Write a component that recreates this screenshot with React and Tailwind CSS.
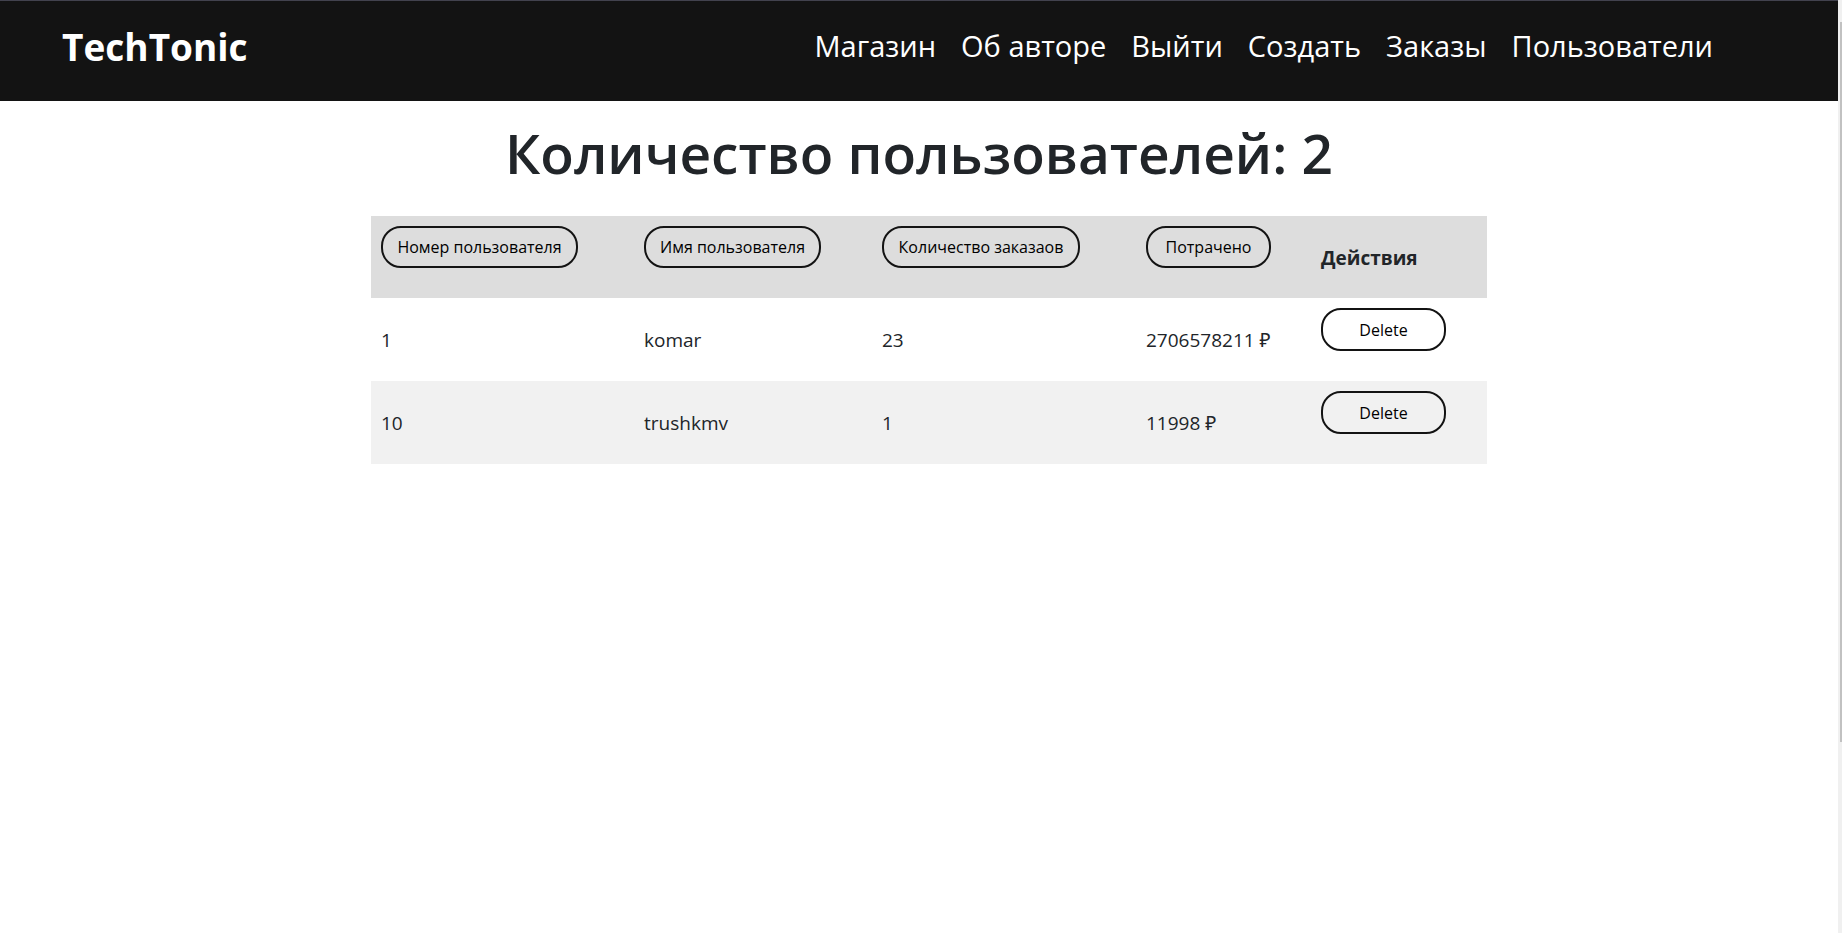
const links = ["Магазин", "Об авторе", "Выйти", "Создать", "Заказы", "Пользователи"];

const columns = [
  { title: "Номер пользователя", width: "w-[263px]", button: "w-[197px]" },
  { title: "Имя пользователя", width: "w-[238px]", button: "w-[177px]" },
  { title: "Количество заказаов", width: "w-[264px]", button: "w-[198px]" },
  { title: "Потрачено", width: "w-[175px]", button: "w-[125px]" },
];

const users = [
  { id: 1, name: "komar", orders: 23, spent: 2706578211 },
  { id: 10, name: "trushkmv", orders: 1, spent: 11998 },
];

function PillButton({ className, children }) {
  return (
    <button
      type="button"
      className={`block cursor-pointer whitespace-nowrap rounded-[20px] border-2 border-[#131313] text-center text-base leading-6 text-black ${className}`}
    >
      {children}
    </button>
  );
}

function Header() {
  return (
    <header className="flex h-[101px] items-start justify-between border-t border-[#42424e] bg-[#131313] pl-[62px] pr-[125px] text-white">
      <a href="#home" className="pt-4 text-[37px] font-bold leading-[60px]">
        TechTonic
      </a>
      <nav className="flex gap-[25px] pt-[21px] text-[29px] leading-[48px]">
        {links.map((label) => (
          <a key={label} href={`#${label}`} className="whitespace-nowrap">
            {label}
          </a>
        ))}
      </nav>
    </header>
  );
}

function UsersTable() {
  return (
    <table className="ml-5 w-[1116px] table-fixed border-collapse text-left text-[19px] leading-[30px]">
      <thead>
        <tr className="h-[82px] bg-[#dddddd]">
          {columns.map((c) => (
            <th key={c.title} scope="col" className={`px-[10px] pt-[10px] align-top font-normal ${c.width}`}>
              <PillButton className={`h-[42px] ${c.button}`}>{c.title}</PillButton>
            </th>
          ))}
          <th scope="col" className="px-[10px] pt-0.5 font-bold">
            Действия
          </th>
        </tr>
      </thead>
      <tbody>
        {users.map((u) => (
          <tr key={u.id} className="h-[83px] even:bg-[#f1f1f1]">
            <td className="px-[10px]">{u.id}</td>
            <td className="px-[10px]">{u.name}</td>
            <td className="px-[10px]">{u.orders}</td>
            <td className="whitespace-nowrap px-[10px]">{u.spent} ₽</td>
            <td className="px-[10px] pt-[10px] align-top">
              <PillButton className="h-[43px] w-[125px]">Delete</PillButton>
            </td>
          </tr>
        ))}
      </tbody>
    </table>
  );
}

export default function App() {
  return (
    <div className="flex min-h-screen bg-white font-['Open_Sans','Noto_Sans',sans-serif] text-[#212529]">
      <div className="min-w-0 flex-1">
        <Header />
        <main className="flex flex-col items-center">
          <h1 className="pt-4 pb-[27px] text-[55px] font-semibold leading-[72px]">
            Количество пользователей: 2
          </h1>
          <UsersTable />
        </main>
      </div>
      <div aria-hidden="true" className="w-1 bg-[#f0f0f0] pl-0.5 pt-[22px]">
        <div className="h-[720px] bg-[#c1c1c1]" />
      </div>
    </div>
  );
}
